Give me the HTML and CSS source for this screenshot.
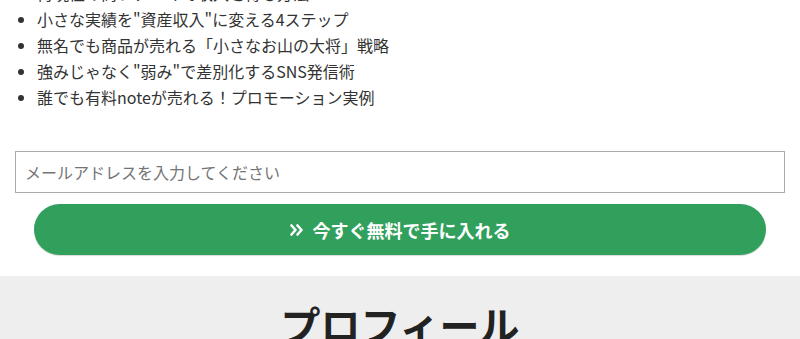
FILE: index.html
```html
<!DOCTYPE html>
<html lang="ja">
<head>
    <meta charset="UTF-8">
    <meta name="viewport" content="width=device-width, initial-scale=1.0">
    <title>無料プレゼント</title>
    <link rel="stylesheet" href="styles.css">
</head>
<body>
    <div class="container">
        <ul class="features">
            <li>再現性の高いテーマで収入を得る方法</li>
            <li>小さな実績を"資産収入"に変える4ステップ</li>
            <li>無名でも商品が売れる「小さなお山の大将」戦略</li>
            <li>強みじゃなく"弱み"で差別化するSNS発信術</li>
            <li>誰でも有料noteが売れる！プロモーション実例</li>
        </ul>

        <form class="signup" onsubmit="return false;">
            <input type="email" class="email" placeholder="メールアドレスを入力してください">
            <button type="submit" class="cta">
                <svg class="cta-icon" viewBox="0 0 14 12" width="14" height="12" aria-hidden="true">
                    <path d="M1.5 1.5 L5.5 6 L1.5 10.5 M7.5 1.5 L11.5 6 L7.5 10.5" fill="none" stroke="#fff" stroke-width="2.6" stroke-linecap="round" stroke-linejoin="round"/>
                </svg>
                今すぐ無料で手に入れる
            </button>
        </form>
    </div>

    <section class="profile">
        <h2>プロフィール</h2>
    </section>
</body>
</html>
```

FILE: styles.css
```css
body {
    margin: 0;
    font-family: "Noto Sans CJK JP", "Noto Sans", sans-serif;
    color: #333;
    background-color: #fff;
}
.container {
    padding: 0 15px 21px;
}
.features {
    margin: -20px 0 0;
    padding-left: 22px;
    font-size: 16px;
    line-height: 26px;
}
.signup {
    margin-top: 41px;
}
.email {
    display: block;
    width: 100%;
    height: 42px;
    padding: 0 9px;
    box-sizing: border-box;
    border: 1px solid #aaa;
    border-radius: 0;
    font-family: inherit;
    font-size: 16px;
    color: #333;
}
.email::placeholder {
    color: #757575;
}
.cta {
    display: flex;
    align-items: center;
    justify-content: center;
    gap: 9px;
    width: calc(100% - 38px);
    height: 51px;
    margin: 11px auto 0;
    border: none;
    border-radius: 26px;
    background-color: #32a05d;
    box-shadow: 0 1px 1px rgba(0, 0, 0, 0.15);
    color: #fff;
    font-family: inherit;
    font-size: 18px;
    font-weight: bold;
    cursor: pointer;
}
.cta-icon {
    flex: none;
}
.profile {
    background-color: #eee;
    padding: 24px 15px 40px;
}
.profile h2 {
    margin: 0;
    text-align: center;
    font-size: 40px;
    line-height: 48px;
    font-weight: bold;
    color: #222;
}
```
